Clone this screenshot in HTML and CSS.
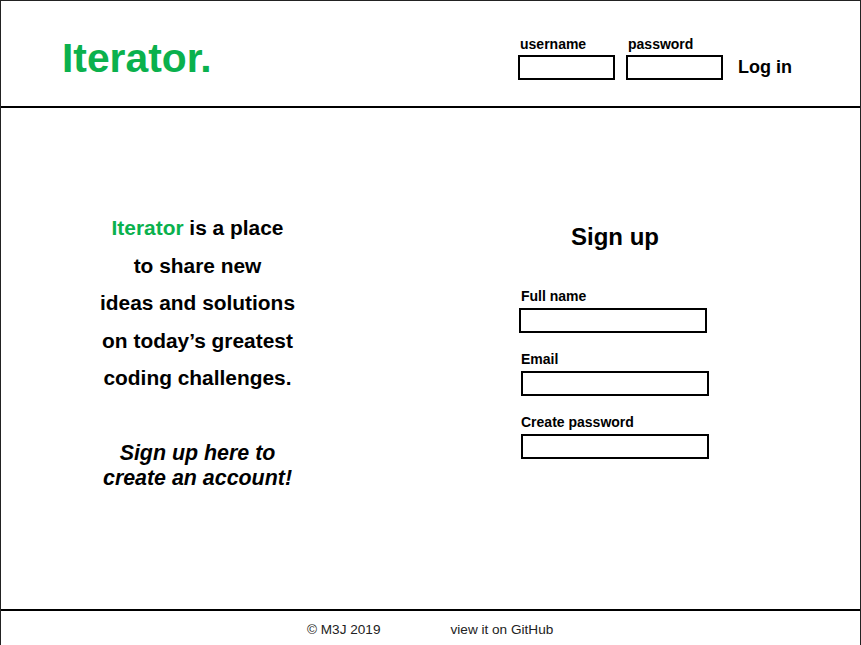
FILE: index.html
```html
<!DOCTYPE html>
<html lang="en">
<head>
<meta charset="utf-8">
<title>Iterator</title>
<link rel="stylesheet" href="styles.css">
</head>
<body>
<div class="page">
  <header class="header">
    <div class="logo">Iterator.</div>
    <form class="login">
      <label class="login-field">
        <span class="login-label">username</span>
        <input class="box" type="text">
      </label>
      <label class="login-field">
        <span class="login-label">password</span>
        <input class="box" type="password">
      </label>
      <span class="login-btn">Log in</span>
    </form>
  </header>
  <main class="main">
    <section class="intro">
      <p class="pitch"><span class="brand">Iterator</span> is a place<br>to share new<br>ideas and solutions<br>on today’s greatest<br>coding challenges.</p>
      <p class="cta">Sign up here to<br>create an account!</p>
    </section>
    <section class="signup">
      <h1 class="signup-title">Sign up</h1>
      <label class="field field-first">
        <span class="field-label">Full name</span>
        <input class="box box-wide" type="text">
      </label>
      <label class="field">
        <span class="field-label">Email</span>
        <input class="box box-wide" type="email">
      </label>
      <label class="field">
        <span class="field-label">Create password</span>
        <input class="box box-wide" type="password">
      </label>
    </section>
  </main>
  <footer class="footer">
    <span>© M3J 2019</span>
    <span>view it on GitHub</span>
  </footer>
</div>
</body>
</html>
```
FILE: styles.css
```css
* { box-sizing: border-box; }
html, body { margin: 0; padding: 0; background: #fff; }
body {
  font-family: "Liberation Sans", Arial, Helvetica, sans-serif;
  color: #000;
}
.page {
  border: 1px solid #222;
  border-bottom: none;
  height: 645px;
  display: flex;
  flex-direction: column;
}
.header {
  height: 107px;
  border-bottom: 2px solid #000;
  display: flex;
  align-items: flex-start;
  padding-left: 61px;
  padding-right: 68px;
}
.logo {
  margin-top: 34px;
  font-size: 40.8px;
  line-height: 46px;
  font-weight: 700;
  color: #0ab14d;
}
.login {
  margin: 35px 0 0 auto;
  display: flex;
  align-items: flex-end;
}
.login-field {
  display: flex;
  flex-direction: column;
  margin-right: 11px;
}
.login-field + .login-field { margin-right: 15px; }
.login-label {
  font-size: 14px;
  font-weight: 700;
  line-height: 16px;
  padding-left: 2px;
  margin-bottom: 3px;
}
.box {
  display: block;
  width: 97px;
  height: 25px;
  border: 2px solid #000;
  border-radius: 0;
  padding: 0;
  margin: 0;
  background: #fff;
  outline: none;
  font: inherit;
}
.login-btn {
  font-size: 18px;
  font-weight: 700;
  line-height: 26px;
}
.main {
  height: 501px;
  display: flex;
}
.intro {
  width: 392px;
  text-align: center;
  padding-top: 101px;
  padding-left: 1px;
}
.pitch {
  margin: 0;
  font-size: 20.9px;
  font-weight: 700;
  line-height: 37.5px;
}
.brand { color: #0ab14d; }
.cta {
  margin: 44px 0 0;
  font-size: 21.4px;
  font-weight: 700;
  font-style: italic;
  line-height: 25px;
}
.signup {
  margin-left: 127px;
  width: 190px;
  padding-top: 114px;
}
.signup-title {
  margin: 0 0 36px;
  text-align: center;
  font-size: 24px;
  font-weight: 700;
  line-height: 30px;
}
.field {
  display: flex;
  flex-direction: column;
  margin-top: 18px;
  padding-left: 1px;
}
.field-first { margin-top: 0; }
.field-first .box { margin-left: -2px; }
.field-label {
  font-size: 14px;
  font-weight: 700;
  line-height: 16px;
  margin-bottom: 4px;
}
.box-wide { width: 188px; }
.footer {
  border-top: 2px solid #000;
  flex: 1;
  display: flex;
  gap: 70px;
  padding-left: 306px;
  padding-top: 11px;
  font-size: 13.6px;
  line-height: 16px;
  color: #222;
}
```
